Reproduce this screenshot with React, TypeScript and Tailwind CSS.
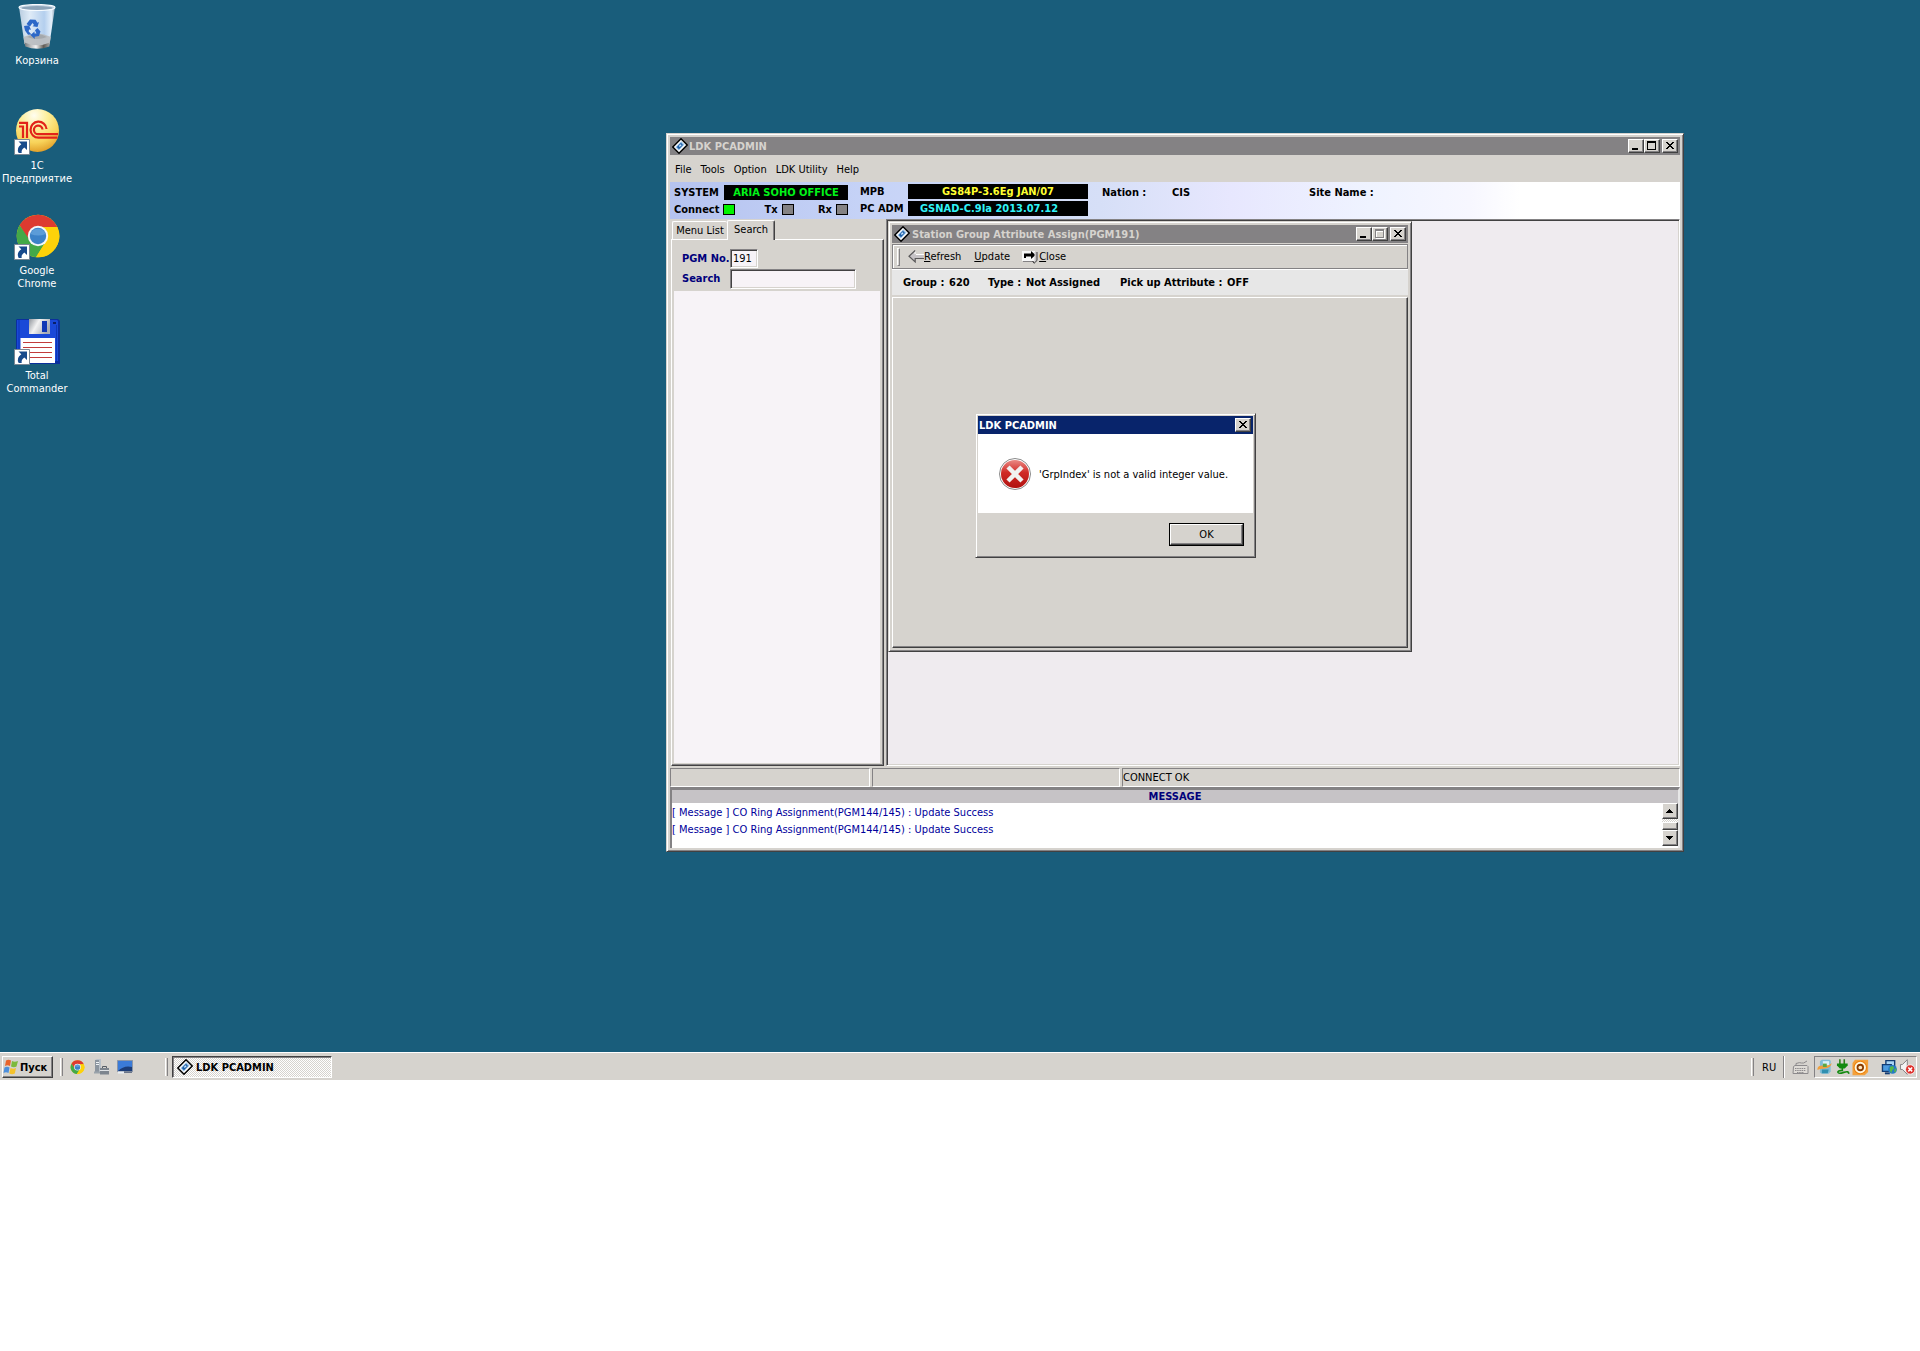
import React from "react";

const raised =
  "bg-[#d6d3ce] border border-t-white border-l-white border-r-[#404040] border-b-[#404040] shadow-[inset_-1px_-1px_0_#848284]";
const windowFrame =
  "bg-[#d6d3ce] border border-t-[#d6d3ce] border-l-[#d6d3ce] border-r-[#424142] border-b-[#424142] shadow-[inset_1px_1px_0_#fff,inset_-1px_-1px_0_#848284]";
const sunkenThin = "border border-t-[#848284] border-l-[#848284] border-r-white border-b-white";
const sunken =
  "border border-t-[#848284] border-l-[#848284] border-r-white border-b-white shadow-[inset_1px_1px_0_#424142,inset_-1px_-1px_0_#d6d3ce]";
const dither = "bg-[repeating-conic-gradient(#fff_0_25%,#d6d3ce_0_50%)] bg-[length:2px_2px]";

function AppIcon() {
  return (
    <svg width="16" height="16" viewBox="0 0 16 16" className="shrink-0" aria-hidden="true">
      <path d="M9 0.8 15.2 7 7 15.2 0.8 9Z" fill="#fff" stroke="#000" strokeWidth="1.5" />
      <path d="M9.3 3.2 12.6 6.5 6.7 12.6 3.4 9.3Z" fill="#9cc3e8" />
      <path d="M9 4.8 11 7 7 11.2 4.8 9Z" fill="#1c5fa8" />
      <path d="m8.6 6.3 1 1-1.8 1.6-1-.9z" fill="#cfe8ff" />
    </svg>
  );
}

function Caption({ kind, disabled }: { kind: "min" | "max" | "close"; disabled?: boolean }) {
  const label = { min: "Minimize", max: "Maximize", close: "Close" }[kind];
  return (
    <button
      type="button"
      aria-label={label}
      disabled={disabled}
      className={`${raised} flex h-[14px] w-4 items-center justify-center`}
    >
      <svg width="12" height="10" viewBox="0 0 12 10" shapeRendering="crispEdges" aria-hidden="true">
        {kind === "min" && <path d="M2 7h6v2H2z" fill="#000" />}
        {kind === "max" && !disabled && (
          <path d="M1 0h9v9H1zM2 2v6h7V2z" fill="#000" fillRule="evenodd" />
        )}
        {kind === "max" && disabled && (
          <>
            <path d="M2 1h9v9H2zM3 3v6h7V3z" fill="#fff" fillRule="evenodd" />
            <path d="M1 0h9v9H1zM2 2v6h7V2z" fill="#848284" fillRule="evenodd" />
          </>
        )}
        {kind === "close" && (
          <path
            d="M2 1h2v1h1v1h2V2h1V1h2v1H9v1H8v1H7v1h1v1h1v1h1v1H8V7H7V6H5v1H4v1H2V7h1V6h1V5h1V4H4V3H3V2H2z"
            fill="#000"
          />
        )}
      </svg>
    </button>
  );
}

function RecycleBin() {
  return (
    <svg width="46" height="46" viewBox="0 0 46 46" aria-hidden="true">
      <defs>
        <linearGradient id="bin" x1="0" x2="1">
          <stop offset="0" stopColor="#b9cde0" />
          <stop offset=".3" stopColor="#dfebf7" />
          <stop offset=".7" stopColor="#b4cfee" />
          <stop offset=".9" stopColor="#e4effa" />
          <stop offset="1" stopColor="#90a5b8" />
        </linearGradient>
        <linearGradient id="binbase" x1="0" x2="1">
          <stop offset="0" stopColor="#77797c" />
          <stop offset=".45" stopColor="#f4f4f4" />
          <stop offset=".75" stopColor="#5f5a54" />
          <stop offset="1" stopColor="#a9a9a9" />
        </linearGradient>
      </defs>
      <path d="M4 3 9.500 40q13 5 25 0L40 3Z" fill="url(#bin)" />
      <path d="M8.500 33q14-7 27.500 0l-1.500 7q-12 5-25 0z" fill="#b9babb" opacity=".85" />
      <path d="M12 33q10-6 20 0-10 4-20 0z" fill="#96999c" opacity=".6" />
      <path d="M9.500 38.500q12.500 5.500 25.500 0l-.7 4q-12 4.500-24 0z" fill="url(#binbase)" />
      <ellipse cx="22" cy="3.500" rx="18" ry="3" fill="#c3d3e2" stroke="#f6fbff" strokeWidth="1.100" />
      <ellipse cx="22" cy="4" rx="15.500" ry="1.900" fill="#6f8aa3" opacity=".65" />
      <g fill="#2d68c8">
        <path d="m11.500 20 3.500-4.500 5.500.2 2 3 1.500-.8-1.500 5.100-5-.8 1.500-1.200-1.500-2-2.500 3.500z" />
        <path d="m9 22 5-.8 2 4.600-2-.4-.3 2.200 2.800 3-3.500.2-3-4.300z" />
        <path d="m22.500 24 3 3.500-1.500 4.500-4.300.8v2.200L15.500 31l4-3.500v1.900h2l-1.500-3.100z" />
      </g>
    </svg>
  );
}

function OneC() {
  return (
    <svg width="46" height="46" viewBox="0 0 46 46" aria-hidden="true">
      <defs>
        <radialGradient id="onec" cx=".42" cy=".15" r=".9">
          <stop offset="0" stopColor="#fffdf0" />
          <stop offset=".35" stopColor="#fdef9a" />
          <stop offset=".7" stopColor="#f8d35a" />
          <stop offset="1" stopColor="#dd9620" />
        </radialGradient>
      </defs>
      <circle cx="22.500" cy="21.500" r="21.500" fill="url(#onec)" />
      <g fill="none" stroke="#e2231a" strokeWidth="2.200">
        <path d="M4 17.500H8V29M4 13.800H12V29" />
        <path d="M31.500 20a8 8 0 1 0-8 8.700H42.500" />
        <path d="M27.500 20.500a4.300 4.300 0 1 0-4 4.700H43" />
      </g>
    </svg>
  );
}

function ChromeIcon({ size }: { size: number }) {
  return (
    <svg width={size} height={size} viewBox="0 0 46 46" aria-hidden="true">
      <circle cx="23" cy="22" r="21.300" fill="#fdd20a" />
      <path d="M4.600 11.300A21.300 21.300 0 0 1 42.300 13H23L14 27Z" fill="#dd3a30" />
      <path d="M4.600 11.300A21.300 21.300 0 0 0 21 43.200L31.500 26.500 23 31 15 26.500Z" fill="#43a948" />
      <path d="M21 43.200 31.500 26.500 32 13h10.300A21.300 21.300 0 0 1 21 43.200Z" fill="#fdd20a" />
      <circle cx="23" cy="22" r="10.200" fill="#f3f6f8" />
      <circle cx="23" cy="22" r="8.200" fill="#3c82c8" />
      <path d="M15.500 20a8 8 0 0 1 15 0q-7 3-15 0z" fill="#6aa6de" opacity=".7" />
    </svg>
  );
}

function Floppy() {
  return (
    <svg width="46" height="46" viewBox="0 0 46 46" aria-hidden="true">
      <defs>
        <linearGradient id="shutter" x1="0" x2="1" y2=".4">
          <stop offset="0" stopColor="#8f949b" />
          <stop offset=".45" stopColor="#f3f3f3" />
          <stop offset="1" stopColor="#a9adb4" />
        </linearGradient>
      </defs>
      <path d="M2 0h41l2 2v43H4l-3-3V1z" fill="#0b2f9d" />
      <path d="M2 1h40l1 1v40H4l-2-2z" fill="#1a49d8" />
      <path d="M4 1v38M41.500 6v36" stroke="#0f37b4" />
      <path d="M14 0h21v15H14z" fill="url(#shutter)" />
      <path d="M27 2h5v11h-5z" fill="#1038b5" />
      <path d="M5.500 19h34.500v25H5.500z" fill="#fff" />
      <path d="M8 23.500h29M8 28.500h29M8 33.500h29M8 38.500h29" stroke="#c23b3b" strokeWidth="1.200" />
      <path d="M38 3h3v2h-3z" fill="#0a2068" />
    </svg>
  );
}

function DesktopIcon({ lines, shortcut, children }: { lines: string[]; shortcut?: boolean; children: React.ReactNode }) {
  return (
    <button type="button" className="flex h-[105px] w-full flex-col items-center text-white">
      <span className="relative ml-[2px] block h-[46px]">
        {children}
        {shortcut && (
          <svg className="absolute bottom-0 -left-px" width="16" height="16" viewBox="0 0 16 16" aria-hidden="true">
            <path d="M.5.5h15v15H.5z" fill="#fff" stroke="#7b8794" />
            <path d="M4.500 2.500H13V11l-2.700-2.600Q7 10.500 7.700 14H4.700Q2 9 7.300 5.300z" fill="#174a8c" />
          </svg>
        )}
      </span>
      <span className="mt-1 text-center leading-[13px]">
        {lines.map((l) => (
          <span key={l} className="block">
            {l}
          </span>
        ))}
      </span>
    </button>
  );
}

function Lamp({ label, on }: { label: string; on?: boolean }) {
  return (
    <span className="flex items-center gap-1">
      {label}
      <span className={`h-[11px] w-3 border border-black ${on ? "bg-[#00f300]" : "bg-[#848284]"}`} />
    </span>
  );
}

function Arrow({ up }: { up?: boolean }) {
  return (
    <svg width="8" height="4" viewBox="0 0 8 4" shapeRendering="crispEdges" aria-hidden="true">
      <path d={up ? "M3 0h1v1h1v1h1v1h1v1H0V3h1V2h1V1h1z" : "M0 0h7v1H6v1H5v1H4v1H3V3H2V2H1V1H0z"} fill="#000" />
    </svg>
  );
}

function InfoPanel() {
  return (
    <div className="flex h-[37px] bg-[linear-gradient(90deg,#b5c3ef_0,#c6d3f7_200px,#d6dff7_430px,#e7e7fe_560px,#eff3ff_700px,#f7f7ff_800px,#fff_850px)] pl-1 font-bold leading-[15px]">
      <div className="flex w-[174px] flex-col gap-px pt-[3px]">
        <div className="flex justify-between">
          <span>SYSTEM</span>
          <span className="h-[15px] w-[124px] bg-black text-center text-[#00f318]">ARIA SOHO OFFICE</span>
        </div>
        <div className="flex h-[17px] items-center">
          <Lamp label="Connect" on />
          <span className="mr-auto ml-[29px]"><Lamp label="Tx" /></span>
          <Lamp label="Rx" />
        </div>
      </div>
      <div className="ml-3 grid w-[228px] grid-cols-[48px_180px] content-start gap-y-[2px] pt-[2px]">
        <span>MPB</span>
        <span className="bg-black text-center text-[#ffff31]">GS84P-3.6Eg JAN/07</span>
        <span>PC ADM</span>
        <span className="bg-black pl-3 text-[#31f3f7]">GSNAD-C.9Ia 2013.07.12</span>
      </div>
      <div className="flex pt-[3px] pl-[14px]">
        <span className="w-[70px]">Nation :</span>
        <span className="w-[137px]">CIS</span>
        <span>Site Name :</span>
      </div>
    </div>
  );
}

function SearchPane() {
  return (
    <div className="flex w-[214px] shrink-0 flex-col pt-px pl-px">
      <div role="tablist" className="relative z-10 flex items-end pl-px">
        <button
          type="button"
          role="tab"
          aria-selected="false"
          className="h-[18px] w-[55px] rounded-t-[2px] border-t border-l border-white pt-px text-center whitespace-nowrap"
        >
          Menu List
        </button>
        <button
          type="button"
          role="tab"
          aria-selected="true"
          className="-mb-px h-5 w-12 rounded-t-[2px] border border-b-0 border-t-white border-l-white border-r-[#424142] bg-[#d6d3ce] pb-[2px] shadow-[inset_-1px_0_0_#848284]"
        >
          Search
        </button>
      </div>
      <div className="flex grow flex-col border border-t-white border-l-white border-r-[#424142] border-b-[#424142] p-[2px] pr-[3px] shadow-[inset_-1px_-1px_0_#848284]">
        <div className="grid grid-cols-[48px_1fr] items-center gap-y-px pt-[7px] pb-[2px] pl-2 font-bold text-[#00007b]">
          <label htmlFor="pgm" className="whitespace-nowrap">PGM No.</label>
          <input id="pgm" defaultValue="191" className={`${sunken} h-[19px] w-7 bg-[#f7f3f7] pl-[2px] font-normal text-black`} />
          <label htmlFor="search">Search</label>
          <input id="search" className={`${sunken} h-5 w-[126px] bg-[#f7f3f7] font-normal text-black`} />
        </div>
        <div className="grow bg-[#f7f3f7]" />
      </div>
    </div>
  );
}

function StationGroupWindow() {
  return (
    <section className={`${windowFrame} absolute top-0 left-0 flex h-[431px] w-[524px] flex-col p-[3px]`}>
      <header className="flex h-[18px] items-center bg-[#848284] pr-[2px] pl-[2px] text-[#d6d3ce]">
        <AppIcon />
        <h2 className="grow pt-px pl-[2px] font-bold">Station Group Attribute Assign(PGM191)</h2>
        <Caption kind="min" />
        <Caption kind="max" disabled />
        <span className="w-[2px]" />
        <Caption kind="close" />
      </header>
      <div className="mt-px border border-[#848284] shadow-[inset_1px_1px_0_#fff,0_1px_0_#fff]">
        <div className="flex h-[23px] items-center pl-1">
          <span className="h-[18px] w-[3px] border border-t-white border-l-white border-r-[#848284] border-b-[#848284]" />
          <button type="button" className="ml-2 flex items-center">
            <svg width="16" height="13" viewBox="0 0 16 13" aria-hidden="true">
              <path d="M7 .8v3.400h8.500v4H7v3.500L.8 6.200z" fill="#c6c3c6" />
              <path d="M7 1v3.200M8 4.500h8" stroke="#fff" fill="none" />
              <path d="M7.200.5 1 6.200l6.200 5.700V8.500H16" stroke="#5a595a" strokeWidth="1.200" fill="none" />
            </svg>
            <span><u>R</u>efresh</span>
          </button>
          <button type="button" className="ml-[13px]"><u>U</u>pdate</button>
          <button type="button" className="ml-3 flex items-center">
            <svg width="17" height="14" viewBox="0 0 17 14" aria-hidden="true">
              <path d="M0 1h13v10H0z" fill="#f7f7f7" />
              <path d="M1 11.500h11" stroke="#848284" />
              <path d="M2 3.500h7V1l4.500 4L9 9V6.500H4V8H2z" fill="#000" />
              <path d="M12.500 2H15v8.500L12.500 13z" fill="#c6c3c6" />
              <path d="M15 2v8.500L12 13.300 10.500 11" fill="none" stroke="#424142" />
            </svg>
            <span><u>C</u>lose</span>
          </button>
        </div>
      </div>
      <div className="mt-px flex h-[25px] items-center bg-[#e7e7e7] pl-[11px] font-bold whitespace-pre">
        <span className="w-[46px]">Group :</span>
        <span className="w-[39px]">620</span>
        <span className="w-[38px]">Type :</span>
        <span className="w-[94px]">Not Assigned</span>
        <span className="w-[107px]">Pick up Attribute :</span>
        <span>OFF</span>
      </div>
      <div className={`${raised} mt-[2px] grow`} />
    </section>
  );
}

function Dialog() {
  return (
    <section role="alertdialog" className={`${windowFrame} absolute top-[413px] left-[975px] flex w-[281px] flex-col p-[2px]`}>
      <header className="flex h-[18px] items-center justify-between bg-[#08246b] pr-[2px] pl-px font-bold text-white">
        <h2 className="pt-px">LDK PCADMIN</h2>
        <Caption kind="close" />
      </header>
      <div className="flex h-[79px] items-center bg-white pl-[21px]">
        <svg width="32" height="32" viewBox="0 0 32 32" aria-hidden="true">
          <defs>
            <linearGradient id="err" x1="0" y1="0" x2="0" y2="1">
              <stop offset="0" stopColor="#ea8a84" />
              <stop offset=".45" stopColor="#d02a26" />
              <stop offset="1" stopColor="#b01210" />
            </linearGradient>
          </defs>
          <circle cx="16" cy="16" r="15.500" fill="#fff" stroke="#8a8a8a" />
          <circle cx="16" cy="16" r="14" fill="url(#err)" />
          <path d="m9 9 14 14M23 9 9 23" stroke="#f1f1f1" strokeWidth="4.500" />
        </svg>
        <p className="pt-[2px] pl-2">'GrpIndex' is not a valid integer value.</p>
      </div>
      <div className="flex justify-end pt-[10px] pr-[9px] pb-[9px]">
        <button type="button" className="h-[23px] w-[75px] border border-black">
          <span className={`${raised} flex h-full items-center justify-center`}>OK</span>
        </button>
      </div>
    </section>
  );
}

function MainWindow() {
  return (
    <section className={`${windowFrame} absolute top-[133px] left-[666px] flex w-[1018px] flex-col p-[3px]`}>
      <header className="flex h-[18px] items-center bg-[#848284] pr-[2px] pl-[2px] text-[#d6d3ce]">
        <AppIcon />
        <h1 className="grow pt-px pl-px font-bold">LDK PCADMIN</h1>
        <Caption kind="min" />
        <Caption kind="max" />
        <span className="w-[2px]" />
        <Caption kind="close" />
      </header>
      <nav className="flex h-[27px] items-center gap-[9px] pt-[2px] pl-[5px]">
        {["File", "Tools", "Option", "LDK Utility", "Help"].map((m) => (
          <button key={m} type="button">{m}</button>
        ))}
      </nav>
      <InfoPanel />
      <div className="flex h-[547px] gap-[2px]">
        <SearchPane />
        <div className={`${sunken} relative grow bg-[#efebef] p-px`}>
          <div className="relative h-full overflow-hidden">
            <StationGroupWindow />
          </div>
        </div>
      </div>
      <div className="mt-[2px] grid h-[18px] grid-cols-[200px_248px_1fr] gap-[2px]">
        <div className={sunkenThin} />
        <div className={sunkenThin} />
        <div className={`${sunkenThin} pt-px leading-4`}>CONNECT OK</div>
      </div>
      <div className="mt-px flex h-[61px] flex-col border-t-[3px] border-r-[2px] border-l-[2px] border-t-[#848284] border-r-[#e7e7e7] border-l-[#848284] bg-white">
        <h2 className="h-[13px] bg-[#c6c3c6] text-center font-bold leading-[13px] text-[#00007b]">MESSAGE</h2>
        <div className="flex grow">
          <ul className="grow pt-px leading-[17px] text-[#00009c]">
            <li>[ Message ] CO Ring Assignment(PGM144/145) : Update Success</li>
            <li>[ Message ] CO Ring Assignment(PGM144/145) : Update Success</li>
          </ul>
          <div className={`flex h-[43px] w-4 flex-col ${dither}`}>
            <button type="button" aria-label="Scroll up" className={`${raised} flex h-4 items-center justify-center`}><Arrow up /></button>
            <div className={`${raised} mt-[3px] h-2`} />
            <button type="button" aria-label="Scroll down" className={`${raised} flex h-4 items-center justify-center`}><Arrow /></button>
          </div>
        </div>
      </div>
    </section>
  );
}

function Grip() {
  return <span className="h-[18px] w-[3px] border-r border-l border-r-[#848284] border-l-white" />;
}

function Taskbar() {
  return (
    <footer className="flex h-7 items-center border-t border-white bg-[#d6d3ce] pt-px pr-[3px] pl-[2px] shadow-[0_-1px_0_#d6d3ce]">
      <button type="button" className={`${raised} flex h-[22px] w-[51px] items-center gap-px font-bold`}>
        <svg width="16" height="16" viewBox="0 0 16 16" aria-hidden="true">
          <path d="M3 1.500q2.500-1.500 5 0L7 7q-2.500-1.500-5 0z" fill="#e8642c" />
          <path d="M9 2q2.500 1.500 6 0l-1.500 5.500q-2.500 1.500-5.500 0z" fill="#7dba3c" />
          <path d="M1.500 8.500q2.500-1.500 5 0l-1 5.500q-2.500-1.500-5 0z" fill="#4c8fdc" />
          <path d="M7.500 9q3 1.500 5.500 0l-1.200 5.500q-2.800 1.500-5.500 0z" fill="#f5c22c" />
        </svg>
        <span className="pt-px">Пуск</span>
      </button>
      <span className="ml-[7px] flex"><Grip /></span>
      <div className="ml-[7px] flex items-center gap-2">
        <button type="button" aria-label="Google Chrome"><ChromeIcon size={15} /></button>
        <button type="button" aria-label="Server Manager">
          <svg width="16" height="16" viewBox="0 0 16 16" aria-hidden="true">
            <path d="M2 1 4 0h4v13H2z" fill="#b9c1c9" />
            <path d="M2 1h4v12H2z" fill="#8b959f" />
            <path d="M3 3.500h3M3 5.500h3" stroke="#eef2f5" />
            <path d="M1 12.500h7v2H1z" fill="#9aa3ab" />
            <path d="M7 9h9v6.500H7z" fill="#7d858e" />
            <path d="M9.500 9V7.500h4V9" fill="none" stroke="#555d66" />
            <path d="M7 11.500h9" stroke="#dfe3e6" />
          </svg>
        </button>
        <button type="button" aria-label="Show desktop">
          <svg width="16" height="16" viewBox="0 0 16 16" aria-hidden="true">
            <path d="M.5 1.500h15v11H.5z" fill="#1c3d78" stroke="#8c97a8" />
            <path d="M1 2h14v6Q7 6 1 12z" fill="#3b7bd8" />
            <path d="M1 12.500h6v2H1z" fill="#e9eef4" />
            <path d="M7 12.500h8V14H7z" fill="#69748a" />
          </svg>
        </button>
      </div>
      <span className="ml-8 flex"><Grip /></span>
      <button
        type="button"
        className={`${dither} ml-1 flex h-[22px] w-[160px] items-center gap-[3px] border border-t-[#424142] border-l-[#424142] border-r-white border-b-white pl-1 font-bold shadow-[inset_1px_1px_0_#848284]`}
      >
        <AppIcon />
        <span className="pt-[2px]">LDK PCADMIN</span>
      </button>
      <div className="ml-auto flex items-center">
        <Grip />
        <span className="w-[29px] pt-px pl-2">RU</span>
        <span className="h-[22px] w-[2px] border-r border-l border-r-white border-l-[#848284]" />
        <svg className="mr-[5px] ml-[7px]" width="17" height="15" viewBox="0 0 17 15" aria-hidden="true">
          <path d="M1.500 6.500 3 5.500h12l1 1v7h-15z" fill="#dedbd6" stroke="#8c8a8c" />
          <path d="M3 8.500h11M3 10.500h11M5 12.500h7" stroke="#8c8a8c" strokeDasharray="1.500 .7" />
          <path d="M4 5V3.500q4-1.500 5.500-.5T15 1" fill="none" stroke="#8c8a8c" />
        </svg>
        <div className={`${sunkenThin} flex h-[22px] w-[103px] items-center gap-[2px] pl-[2px]`}>
          <svg width="16" height="16" viewBox="0 0 16 16" aria-hidden="true">
            <path d="M5 .5h8l1 1v11L12 15H5l-2-1V2z" fill="#7fbcd6" />
            <path d="M6 2h6.500v5H6z" fill="#d8f0f8" />
            <path d="M5 10.500h7l-1 4H5z" fill="#2f8fb0" />
            <path d="M.5 9.500Q1 6 7 6.500t8-2.500q-.5 5-6.500 5.500T.5 11z" fill="#ef9f3c" />
            <path d="M6 4.500h4v3.500H6z" fill="#5aa846" />
          </svg>
          <svg width="16" height="16" viewBox="0 0 16 16" aria-hidden="true">
            <path d="M5 0v5M9.500 0v5" stroke="#2d7f1c" strokeWidth="1.600" />
            <path d="M2 4.500h11v2l-3 3H5l-3-3z" fill="#138a10" />
            <path d="M7.500 9v2.500q-5 .2-4.500 2t6 0 5 1.500" fill="none" stroke="#138a10" strokeWidth="1.700" />
          </svg>
          <svg width="17" height="17" viewBox="0 0 17 17" aria-hidden="true">
            <path d="M3 .5h13.500V13l-3.500 3.500H.5V4z" fill="#f3a13c" />
            <circle cx="8.500" cy="8.500" r="7" fill="#ee8410" />
            <circle cx="8.500" cy="8.500" r="4.800" fill="#8a3b00" stroke="#fff8e0" strokeWidth="2" />
            <circle cx="8.500" cy="8.500" r="1.900" fill="#ffe9c0" />
          </svg>
          <svg className="ml-[10px]" width="17" height="16" viewBox="0 0 17 16" aria-hidden="true">
            <path d="M5 1.500h9v7H5z" fill="#a8d4f4" stroke="#123c74" strokeWidth="1.400" />
            <path d="M1.500 5.500h9v7h-9z" fill="#4c9be0" stroke="#123c74" strokeWidth="1.400" />
            <path d="M4 14.500h5" stroke="#123c74" strokeWidth="2" />
            <circle cx="11.800" cy="10.500" r="4.500" fill="#2479c8" />
            <path d="m9 8 3-1 1.500 2-2 2.500-1 3-1.500-3zM14 10l2-.5-1 3.500-1.500.5z" fill="#55b848" />
          </svg>
          <svg width="17" height="16" viewBox="0 0 17 16" aria-hidden="true">
            <path d="M1.500 5.500h2l5-5v15l-5-5h-2z" fill="#f3f3f3" stroke="#848284" />
            <circle cx="11.500" cy="10.500" r="4.800" fill="#dd2f2a" stroke="#fff" strokeWidth=".8" />
            <path d="m9.500 8.500 4 4m0-4-4 4" stroke="#fff" strokeWidth="1.600" />
          </svg>
        </div>
      </div>
    </footer>
  );
}

export default function App() {
  return (
    <div className="min-h-screen bg-white font-['Tahoma','DejaVu_Sans_Condensed',sans-serif] text-[11px] leading-[14px] text-black">
      <main className="relative min-h-[1052px] bg-[#195d7b] pt-1">
        <div className="w-[74px]">
          <DesktopIcon lines={["Корзина"]}><RecycleBin /></DesktopIcon>
          <DesktopIcon lines={["1C", "Предприятие"]} shortcut><OneC /></DesktopIcon>
          <DesktopIcon lines={["Google", "Chrome"]} shortcut><ChromeIcon size={46} /></DesktopIcon>
          <DesktopIcon lines={["Total", "Commander"]} shortcut><Floppy /></DesktopIcon>
        </div>
        <MainWindow />
        <Dialog />
      </main>
      <Taskbar />
    </div>
  );
}
